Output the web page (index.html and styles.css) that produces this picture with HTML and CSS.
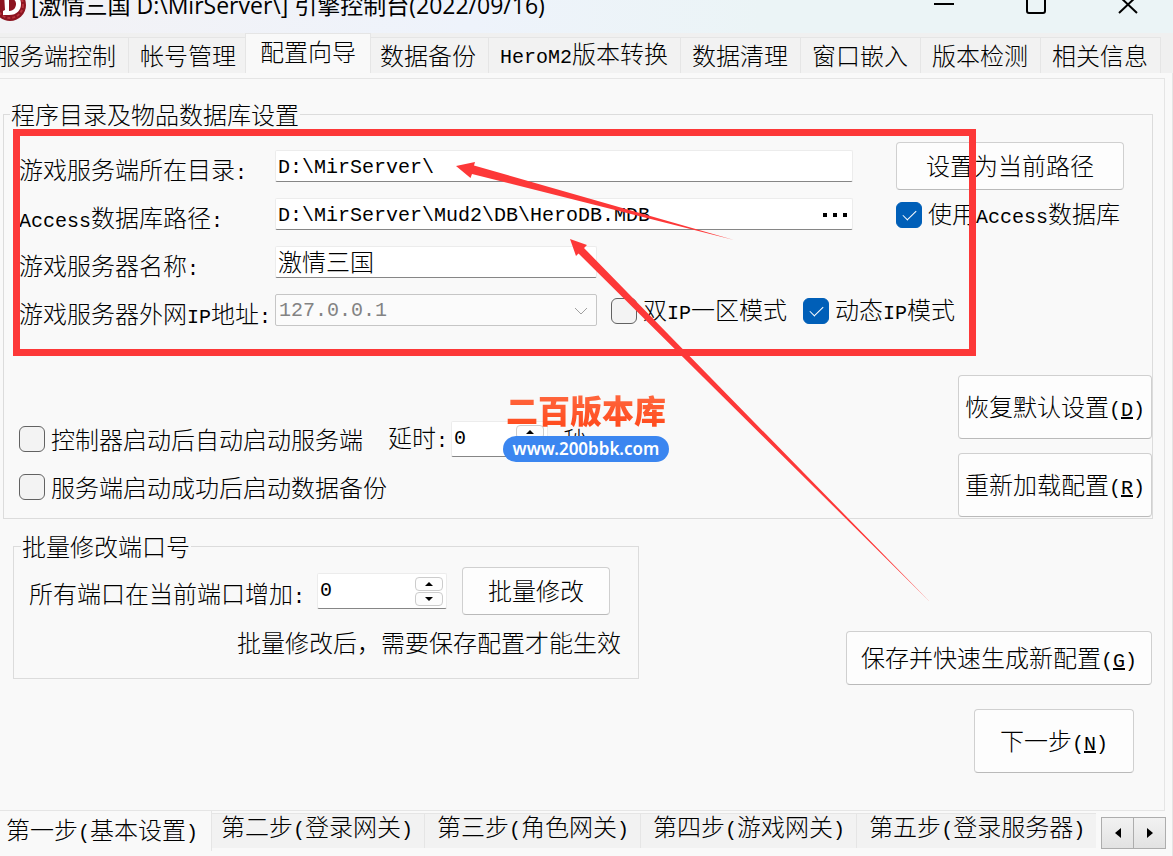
FILE: index.html
```html
<!DOCTYPE html>
<html lang="zh-CN">
<head>
  <meta charset="UTF-8">
  <meta name="viewport" content="width=device-width, initial-scale=1.0">
  <title>引擎控制台</title>
  <link rel="stylesheet" href="styles.css">
</head>
<body>
  <header class="titlebar">
    <svg class="logo" viewBox="0 0 32 32">
      <circle cx="16" cy="16" r="16" fill="#8c1420"/>
      <circle cx="16" cy="16" r="13" fill="none" stroke="#b9323c" stroke-width="2" stroke-dasharray="3 2"/>
      <path d="M10 4h5c8 0 12 5 12 11s-4 11-12 11h-6v-4l2-1z" fill="#fff"/>
      <path d="M15 9c5 0 7 3 7 6s-2 7-7 7z" fill="#8c1420"/>
    </svg>
    <h1>[激情三国 D:\MirServer\] 引擎控制台(2022/09/16)</h1>
    <div class="window-buttons">
      <button type="button" aria-label="最小化"><svg viewBox="0 0 20 20"><path d="M0 9h20"/></svg></button>
      <button type="button" aria-label="最大化"><svg viewBox="0 0 20 20"><rect x="1" y="1" width="18" height="17" rx="2"/></svg></button>
      <button type="button" aria-label="关闭"><svg viewBox="0 0 20 20"><path d="M1 1l18 17M19 1L1 18"/></svg></button>
    </div>
  </header>

  <nav class="tabs">
    <button type="button">服务端控制</button>
    <button type="button">帐号管理</button>
    <button type="button" class="active">配置向导</button>
    <button type="button">数据备份</button>
    <button type="button"><span class="en">HeroM2</span>版本转换</button>
    <button type="button">数据清理</button>
    <button type="button">窗口嵌入</button>
    <button type="button">版本检测</button>
    <button type="button">相关信息</button>
  </nav>

  <main class="page">
    <form class="panel">
      <fieldset class="group paths">
        <legend>程序目录及物品数据库设置</legend>
        <div class="row">
          <label class="name" for="server-dir">游戏服务端所在目录<span class="en">:</span></label>
          <input class="text" type="text" id="server-dir" value="D:\MirServer\">
          <div class="side"><button type="button" class="btn">设置为当前路径</button></div>
        </div>
        <div class="row">
          <label class="name" for="db-path"><span class="en">Access</span>数据库路径<span class="en">:</span></label>
          <div class="browse">
            <input class="text" type="text" id="db-path" value="D:\MirServer\Mud2\DB\HeroDB.MDB">
            <button type="button" aria-label="浏览"><svg viewBox="0 0 24 4"><path d="M0 0h4v4H0zM10 0h4v4h-4zM20 0h4v4h-4z"/></svg></button>
          </div>
          <div class="side"><label class="check"><input type="checkbox" checked><span>使用<span class="en">Access</span>数据库</span></label></div>
        </div>
        <div class="row">
          <label class="name" for="server-name">游戏服务器名称<span class="en">:</span></label>
          <input class="text short cjk" type="text" id="server-name" value="激情三国">
        </div>
        <div class="row">
          <label class="name" for="server-ip">游戏服务器外网<span class="en">IP</span>地址<span class="en">:</span></label>
          <div class="combo">
            <select id="server-ip" disabled><option>127.0.0.1</option></select>
            <svg viewBox="0 0 14 8"><path d="M1 1l6 6 6-6"/></svg>
          </div>
          <label class="check"><input type="checkbox"><span>双<span class="en">IP</span>一区模式</span></label>
          <label class="check"><input type="checkbox" checked><span>动态<span class="en">IP</span>模式</span></label>
        </div>

        <div class="startup">
          <div class="options">
            <div class="row">
              <label class="check"><input type="checkbox"><span>控制器启动后自动启动服务端</span></label>
              <label class="delay" for="delay">延时<span class="en">:</span></label>
              <div class="spin small">
                <input type="text" id="delay" value="0">
                <div class="arrows">
                  <button type="button" aria-label="增加"><svg viewBox="0 0 8 4"><path d="M0 4l4-4 4 4z"/></svg></button>
                  <button type="button" aria-label="减少"><svg viewBox="0 0 8 4"><path d="M0 0l4 4 4-4z"/></svg></button>
                </div>
              </div>
              <span class="unit">秒</span>
            </div>
            <div class="row">
              <label class="check"><input type="checkbox"><span>服务端启动成功后启动数据备份</span></label>
            </div>
          </div>
          <div class="actions">
            <button type="button" class="btn tall">恢复默认设置<span class="en">(<u>D</u>)</span></button>
            <button type="button" class="btn tall">重新加载配置<span class="en">(<u>R</u>)</span></button>
          </div>
        </div>
      </fieldset>

      <div class="lower">
        <fieldset class="group ports">
          <legend>批量修改端口号</legend>
          <div class="row">
            <label class="step" for="port-step">所有端口在当前端口增加<span class="en">:</span></label>
            <div class="spin">
              <input type="text" id="port-step" value="0">
              <div class="arrows">
                <button type="button" aria-label="增加"><svg viewBox="0 0 8 4"><path d="M0 4l4-4 4 4z"/></svg></button>
                <button type="button" aria-label="减少"><svg viewBox="0 0 8 4"><path d="M0 0l4 4 4-4z"/></svg></button>
              </div>
            </div>
            <button type="button" class="btn">批量修改</button>
          </div>
          <p>批量修改后，需要保存配置才能生效</p>
        </fieldset>
        <div class="finish">
          <button type="button" class="btn save">保存并快速生成新配置<span class="en">(<u>G</u>)</span></button>
          <button type="button" class="btn tall next">下一步<span class="en">(<u>N</u>)</span></button>
        </div>
      </div>
    </form>

    <nav class="steps">
      <button type="button" class="active">第一步<span class="en">(</span>基本设置<span class="en">)</span></button>
      <button type="button">第二步<span class="en">(</span>登录网关<span class="en">)</span></button>
      <button type="button">第三步<span class="en">(</span>角色网关<span class="en">)</span></button>
      <button type="button">第四步<span class="en">(</span>游戏网关<span class="en">)</span></button>
      <button type="button">第五步<span class="en">(</span>登录服务器<span class="en">)</span></button>
      <div class="scroll">
        <button type="button" aria-label="向左"><svg viewBox="0 0 6 10"><path d="M6 0v10L0 5z"/></svg></button>
        <button type="button" aria-label="向右"><svg viewBox="0 0 6 10"><path d="M0 0v10l6-5z"/></svg></button>
      </div>
    </nav>
  </main>

  <!-- red marks over the form -->
  <svg class="marks" width="980" height="620" viewBox="0 0 980 620">
    <rect x="16.500" y="132.500" width="956" height="220" fill="none" stroke="#fd3838" stroke-width="7"/>
    <path fill="#fd3838" d="M456 166L475 162L474 165.500L734 240L472 174L470.500 178z"/>
    <path fill="#fd3838" d="M570 239L587 245L584 248L930 602L578.500 253.500L576 256z"/>
  </svg>

  <div class="watermark">
    <strong>二百版本库</strong>
    <span>www.200bbk.com</span>
  </div>
</body>
</html>
```
FILE: styles.css
```css
:root {
  --red: #fd3838;
  --blue: #005fb8;
  --face: #f9f9f9;
  --tab: #f2f2f2;
  --line: #dcdcdc;
  --line-soft: #e5e5e5;
  --mono: "Liberation Mono", "Noto Sans CJK SC", monospace;
}

* {
  margin: 0;
  padding: 0;
  box-sizing: border-box;
}

body {
  position: relative;
  display: flex;
  flex-direction: column;
  min-height: 100vh;
  overflow: hidden;
  background: #f0f0f0;
  color: #000;
  font-family: "Noto Sans CJK SC", sans-serif;
  font-size: 24px;
  font-weight: 300;
  line-height: 24px;
  white-space: nowrap;
}

button,
input,
select {
  color: inherit;
  font: inherit;
}

svg {
  display: block;
}

.en {
  font-family: var(--mono);
  font-size: 20px;
}

/* title bar, its upper part runs off the window */
.titlebar {
  display: flex;
  align-items: center;
  height: 56px;
  margin-top: -23px;
  padding-right: 35px;
  background: linear-gradient(90deg, #f3f2f5, #eef3fb 40%, #ebf4f6 65%);
}

.logo {
  width: 32px;
  height: 32px;
  margin-left: -6px;
}

.titlebar h1 {
  flex: 1;
  margin-left: 5px;
  font-family: "Open Sans", "Noto Sans CJK SC", sans-serif;
  font-size: 23px;
  font-weight: 400;
}

.window-buttons {
  display: flex;
  gap: 72px;
}

.window-buttons button {
  width: 20px;
  height: 20px;
  border: none;
  background: none;
}

.window-buttons path,
.window-buttons rect {
  fill: none;
  stroke: #000;
  stroke-width: 2;
}

/* tabs */
.tabs {
  display: flex;
  align-items: flex-end;
  height: 40px;
  margin-left: -16px;
}

.tabs button {
  height: 36px;
  padding: 0 12px 1px 11px;
  border: 1px solid var(--line-soft);
  border-width: 1px 0 0 1px;
  background: var(--tab);
}

.tabs button:last-child {
  border-right-width: 1px;
}

.tabs .active {
  position: relative;
  height: 40px;
  margin: 0 -3px;
  padding: 0 14px 5px;
  border-right-width: 1px;
  background: var(--face);
}

.page {
  display: flex;
  flex: 1;
  flex-direction: column;
  padding-top: 5px;
  border-right: 1px solid var(--line-soft);
  background: var(--face);
}

.panel {
  flex: 1;
  margin-right: 7px;
  padding: 23px 11px 35px 0;
  border: 1px solid var(--line-soft);
  border-left: none;
}

.group {
  min-width: 0;
  border: 1px solid var(--line);
}

.group legend {
  height: 24px;
  padding: 0 1px;
}

.row {
  display: flex;
  align-items: center;
  height: 48px;
}

/* directories and database */
.paths {
  margin-left: 3px;
  padding: 16px 0 1px;
}

.paths legend {
  margin-left: 6px;
}

.paths > .row {
  padding: 0 28px 0 15px;
}

.paths > .row .check {
  padding-top: 2px;
}

.name {
  flex: none;
  width: 256px;
  padding-top: 10px;
}

.text {
  flex: 1;
  min-width: 0;
  height: 32px;
  padding: 2px 2px 0;
  border: 1px solid #ececec;
  border-bottom-color: #868686;
  border-radius: 2px;
  background: #fff;
  font-family: var(--mono);
  font-size: 20px;
}

.short {
  flex: none;
  width: 322px;
}

.cjk {
  padding: 0 2px 4px;
  font-size: 24px;
}

.browse {
  position: relative;
  display: flex;
  flex: 1;
}

.browse button {
  position: absolute;
  top: 5px;
  right: 2px;
  width: 32px;
  height: 24px;
  padding: 0 4px;
  border: none;
  background: #fff;
}

.side {
  flex: none;
  width: 228px;
  margin-left: 43px;
}

.btn {
  height: 48px;
  padding-bottom: 2px;
  border: 1px solid #d0d0d0;
  border-bottom-color: #bababa;
  border-radius: 4px;
  background: #fdfdfd;
}

.side .btn {
  width: 100%;
}

.tall {
  height: 64px;
  padding: 2px 0 0;
}

.check {
  display: flex;
  align-items: center;
  gap: 6px;
}

.combo + .check {
  margin-left: 14px;
}

.check + .check {
  margin-left: 16px;
}

.check input {
  position: relative;
  width: 26px;
  height: 26px;
  border: 1px solid #626262;
  border-radius: 6px;
  background: #f3f3f3;
  appearance: none;
}

.check input:checked {
  border-color: var(--blue);
  background: var(--blue);
}

.check input:checked::after {
  content: "";
  position: absolute;
  top: 7px;
  left: 6px;
  width: 12px;
  height: 6px;
  border: solid #fff;
  border-width: 0 0 1px 1px;
  transform: rotate(-45deg);
}

.combo {
  position: relative;
  width: 322px;
}

.combo select {
  display: block;
  width: 100%;
  height: 32px;
  padding: 2px 3px 0;
  border: 1px solid #c6c6c6;
  border-radius: 2px;
  background: #fbfbfb;
  color: #838383;
  font-family: var(--mono);
  font-size: 20px;
  opacity: 1;
  appearance: none;
}

.combo svg {
  position: absolute;
  top: 13px;
  right: 9px;
  width: 14px;
  fill: none;
  stroke: #a0a0a0;
}

/* start-up options */
.startup {
  display: flex;
  justify-content: space-between;
}

.options {
  padding: 81px 0 0 15px;
}

.delay {
  margin: 0 3px 0 25px;
}

.spin {
  display: flex;
  align-items: center;
  width: 130px;
  height: 36px;
  padding: 0 3px 0 2px;
  border: 1px solid #ececec;
  border-bottom-color: #868686;
  border-radius: 2px;
  background: #fff;
}

.spin.small {
  width: 97px;
}

.spin input {
  flex: 1;
  min-width: 0;
  border: none;
  background: none;
  font-family: var(--mono);
  font-size: 20px;
}

.arrows {
  display: grid;
  gap: 1px;
}

.arrows button {
  display: grid;
  place-items: center;
  width: 28px;
  height: 14px;
  border: 1px solid #ccc;
  border-radius: 4px;
  background: #fdfdfd;
}

.arrows svg {
  width: 8px;
}

.unit {
  margin-left: 15px;
}

.actions {
  display: grid;
  gap: 14px;
  padding-top: 41px;
}

.actions .btn {
  width: 194px;
}

/* ports and finish buttons */
.lower {
  display: flex;
  align-items: flex-start;
  justify-content: space-between;
  padding: 15px 1px 0 13px;
}

.ports {
  width: 626px;
  padding: 9px 17px 11px 15px;
}

.ports legend {
  margin-left: -8px;
}

.step {
  padding-top: 8px;
}

.ports .spin {
  margin: 0 15px 0 12px;
}

.ports .btn {
  width: 148px;
}

.ports p {
  padding-top: 15px;
  padding-bottom: 13px;
  text-align: right;
}

.finish {
  display: flex;
  flex-direction: column;
  align-items: flex-end;
  gap: 24px;
  padding-top: 97px;
}

.save {
  width: 306px;
  height: 54px;
  padding: 2px 0 0;
}

.next {
  width: 160px;
  margin-right: 18px;
}

/* wizard steps */
.steps {
  position: relative;
  display: flex;
  align-items: flex-start;
  height: 45px;
  margin-left: -6px;
}

.steps > button {
  height: 35px;
  margin-top: 2px;
  padding: 0 11px 5px 12px;
  border: 1px solid var(--line-soft);
  border-width: 1px 0 0 1px;
  background: var(--tab);
}

.steps > .active {
  position: relative;
  height: 40px;
  margin: 0 -4px 0 0;
  padding: 0 13px 0 12px;
  border-width: 0 1px 0 0;
  background: var(--face);
}

.scroll {
  display: flex;
  margin: 6px 6px 0 auto;
}

.scroll button {
  display: grid;
  place-items: center;
  width: 33px;
  height: 32px;
  border: 1px solid #adadad;
  background: linear-gradient(#f2f2f2, #e2e2e2);
}

.scroll button + button {
  margin-left: -1px;
}

.scroll svg {
  width: 6px;
}

/* overlays */
.marks {
  position: absolute;
  top: 0;
  left: 0;
  pointer-events: none;
}

.watermark {
  position: absolute;
  top: 391px;
  left: 503px;
  width: 166px;
  text-align: center;
}

.watermark strong {
  display: block;
  height: 45px;
  background: linear-gradient(#ff6a42, #ff4a1c 36px);
  background-clip: text;
  color: transparent;
  font-size: 32px;
  font-weight: 900;
  line-height: 36px;
}

.watermark span {
  display: block;
  height: 26px;
  border-radius: 13px;
  background: #3b86f0;
  color: #fff;
  font-family: "Noto Sans", sans-serif;
  font-size: 17px;
  font-weight: 600;
  line-height: 26px;
}
```
